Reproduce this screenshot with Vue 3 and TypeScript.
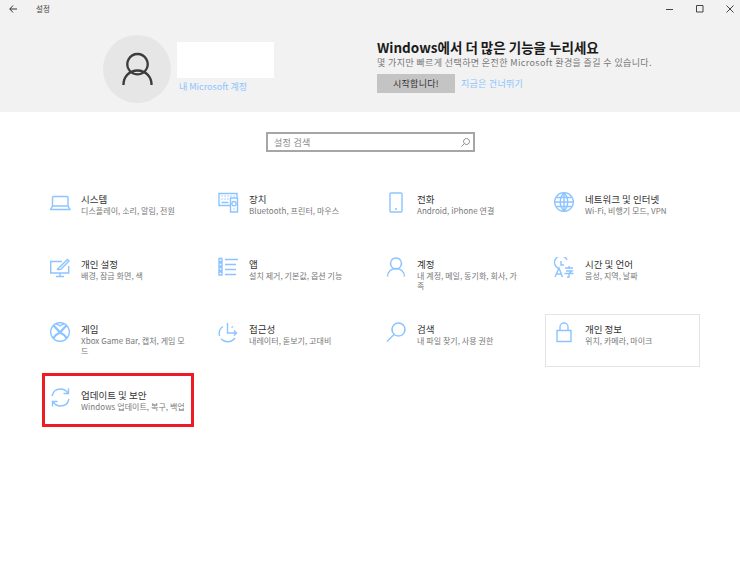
<script setup lang="ts">
interface Tile { id: string; title: string; sub: string; paths: string[]; hover?: boolean; marked?: boolean; thick?: number }
const tiles: Tile[] = [
  { id: 'sys', title: '시스템', sub: '디스플레이, 소리, 알림, 전원', paths: ['M3.500 4.500h13.500a1 1 0 0 1 1 1V14H2.500V5.500a1 1 0 0 1 1-1Z', 'M2.500 14 .7 17.500h19.200L18 14'] },
  { id: 'dev', title: '장치', sub: 'Bluetooth, 프린터, 마우스', paths: ['M12.500 13.500H1v-12h18v4', 'M3.500 4h1M6.500 4h1M9.500 4h1M12.500 4h1M15.500 4h1M3.500 7h1M6.500 7h1M9.500 7h1M3.500 10.500h7', 'M12.500 6h7v14h-7Z', 'M16 9.500a2.200 2.200 0 1 0 .01 0M16 16.500v1'] },
  { id: 'phone', title: '전화', sub: 'Android, iPhone 연결', paths: ['M5 1h10a1 1 0 0 1 1 1v17a1 1 0 0 1-1 1H5a1 1 0 0 1-1-1V2a1 1 0 0 1 1-1Z', 'M9 17h2'] },
  { id: 'net', title: '네트워크 및 인터넷', sub: 'Wi-Fi, 비행기 모드, VPN', paths: ['M10 .7a9.300 9.300 0 1 0 .01 0Z', 'M10 1c-5 5-5 13 0 18M10 1c5 5 5 13 0 18M10 1v18M1 10h18M2.500 5.500h15M2.500 14.500h15'] },
  { id: 'pers', title: '개인 설정', sub: '배경, 잠금 화면, 색', paths: ['M12 4.500H.7v11.500h18V9', 'M6 19.500h8M10 16v3.500', 'M7 12.500c2-.3 1.700-2.500 3.200-2.900L17.500 2.500 19 4l-7.100 7.300c-.8 1.200-2.900 1.500-4.900 1.200Z'] },
  { id: 'apps', title: '앱', sub: '설치 제거, 기본값, 옵션 기능', paths: ['M7 2.500h13M7 7.500h11M7 12.500h11M7 17.500h11', 'M1 1.500h3v3H1ZM1 6h3v3H1ZM1 10.500h3v3H1ZM1 15h3v3H1Z'] },
  { id: 'acc', title: '계정', sub: '내 계정, 메일, 동기화, 회사, 가족', paths: ['M10 1a5.500 5.500 0 1 0 .01 0Z', 'M1.500 19.500c0-4.800 3.800-8 8.500-8s8.500 3.200 8.500 8'] },
  { id: 'time', title: '시간 및 언어', sub: '음성, 지역, 날짜', paths: ['M4.500 11.500A6.500 6.500 0 1 1 13 3', 'M7 4v4h3', 'M1 20 5 11l3.500 9M2.500 17h5', 'M11 11h8M15 9v3M12 14h6l-3 2.500v3.500h-2M10.500 16.500h9'] },
  { id: 'game', title: '게임', sub: 'Xbox Game Bar, 캡처, 게임 모드', paths: ['M10 .7a9.300 9.300 0 1 0 .01 0Z', 'M3.500 3.500C6 6 8 8 10 10.500c2-2.500 4-4.500 6.500-7M3 16.500C5 13.500 7.500 11.500 10 10.500c2.500 1 5 3 7 6', 'M6 2c1.500.3 2.800 1 4 1.800C11.200 3 12.500 2.300 14 2'], thick: 1 },
  { id: 'ease', title: '접근성', sub: '내레이터, 돋보기, 고대비', paths: ['M5 4.500A9 9 0 0 0 1.500 14M3 17c3.500 3.500 10 4 14-1', 'M9.500 1v10h9M16 8.500l2.500 2.500-2.500 2.500M13.500 5.500l1.500-1'] },
  { id: 'search', title: '검색', sub: '내 파일 찾기, 사용 권한', paths: ['M12.500 1a6.500 6.500 0 1 0 .01 0Z', 'M8 12.500 1 19.500'] },
  { id: 'priv', title: '개인 정보', sub: '위치, 카메라, 마이크', paths: ['M3 8.500h14v11H3Z', 'M6 8.500V5a4 4 0 0 1 8 0v3.500'], hover: true },
  { id: 'upd', title: '업데이트 및 보안', sub: 'Windows 업데이트, 복구, 백업', paths: ['M2 9C3 4.500 6.500 2 10.500 2c3 0 5.500 1.300 7.500 4M18.500 1.500V6.500H13.500', 'M19 12c-1 4.500-4.500 7-8.500 7-3 0-5.500-1.300-7.500-4M2.500 19.500V14.500H7.500'], marked: true },
]
</script>

<template>
  <div class="win">
    <header class="top">
      <div class="titlebar">
        <div class="title-left">
          <svg class="back" width="8" height="8" viewBox="0 0 8 8"><path d="M4 .5.8 4 4 7.500M.8 4H8" fill="none" stroke="#333" stroke-width="1" /></svg>
          <span class="app-name">설정</span>
        </div>
        <div class="controls">
          <svg width="8" height="8" viewBox="0 0 8 8"><path d="M0 4.500h7" stroke="#444" fill="none" /></svg>
          <svg width="8" height="8" viewBox="0 0 8 8"><path d="M.5.500h6.500v6.500H.5Z" stroke="#444" fill="none" /></svg>
          <svg width="8" height="8" viewBox="0 0 8 8"><path d="M.5.500l7 7M7.500.500l-7 7" stroke="#444" fill="none" /></svg>
        </div>
      </div>
      <div class="hero">
        <div class="avatar">
          <svg width="32" height="36" viewBox="0 0 32 36"><path d="M16 2a10.500 10.500 0 1 0 .01 0ZM1.500 34c0-8.500 6-15 14.500-15s14.500 6.500 14.500 15" fill="none" stroke="#3c3c3c" stroke-width="2.400" /></svg>
        </div>
        <div class="user">
          <div class="name-box"></div>
          <a class="link ms">내 Microsoft 계정</a>
        </div>
        <div class="promo">
          <h1>Windows에서 더 많은 기능을 누리세요</h1>
          <p>몇 가지만 빠르게 선택하면 온전한 Microsoft 환경을 즐길 수 있습니다.</p>
          <div class="actions">
            <button class="start">시작합니다!</button>
            <a class="link skip">지금은 건너뛰기</a>
          </div>
        </div>
      </div>
    </header>

    <div class="search">
      <span>설정 검색</span>
      <svg width="9" height="9" viewBox="0 0 9 9"><path d="M5.500.500a3 3 0 1 0 .01 0ZM3.300 5.700.5 8.500" fill="none" stroke="#777" stroke-width=".8" /></svg>
    </div>

    <main class="grid">
      <div v-for="t in tiles" :key="t.id" class="tile" :class="{ hover: t.hover, marked: t.marked }">
        <svg class="icon" width="21" height="21" viewBox="0 0 21 21">
          <path v-for="(d, i) in t.paths" :key="i" :d="d" fill="none" stroke="#8cc4ff" :stroke-width="t.thick === i ? 2.400 : 1.400" />
        </svg>
        <div class="text">
          <div class="t">{{ t.title }}</div>
          <div class="s">{{ t.sub }}</div>
        </div>
      </div>
    </main>
  </div>
</template>

<style>
html, body { margin: 0; background: #fff; }
</style>

<style scoped>
.win { width: 740px; height: 579px; overflow: hidden; background: #fff; font-family: "Noto Sans CJK KR", "Noto Sans", sans-serif; position: relative; }
.top { height: 112px; background: #f2f2f2; }
.titlebar { height: 18px; display: flex; justify-content: space-between; align-items: center; }
.title-left { display: flex; align-items: center; }
.back { margin-left: 9px; }
.app-name { margin-left: 19px; font-size: 7.500px; color: #444; line-height: 18px; }
.controls { display: flex; gap: 22px; margin-right: 6px; }
.hero { display: flex; padding: 17px 0 0 103px; }
.avatar { width: 68px; height: 68px; border-radius: 50%; background: #e6e6e6; display: flex; align-items: center; justify-content: center; flex: none; }
.avatar svg { width: 31px; height: 35px; }
.user { width: 200px; margin-left: 6px; padding-top: 7px; box-sizing: border-box; }
.name-box { width: 97px; height: 36px; background: #fff; }
.link { color: #8cc4ff; font-size: 9px; line-height: 12px; }
.ms { display: block; margin: 3px 0 0 2px; }
.skip { letter-spacing: .25px; }
.promo { padding-top: 4px; }
h1 { margin: 0; font-size: 13.500px; line-height: 17px; font-weight: 700; color: #1a1a1a; }
p { margin: 0; font-size: 9px; line-height: 14px; color: #777; letter-spacing: .38px; white-space: nowrap; }
.actions { display: flex; align-items: center; margin-top: 4px; gap: 6px; }
.start { width: 78px; height: 19px; border: 0; padding: 0; background: #c4c4c4; color: #333; font: inherit; font-size: 9px; letter-spacing: .3px; }
.search { width: 209px; height: 20px; margin: 20px 0 0 266px; box-sizing: border-box; border: 2px solid #a6a6a6; background: #fff; display: flex; align-items: center; justify-content: space-between; padding: 0 3px 0 6px; font-size: 9px; letter-spacing: .3px; color: #888; }
.grid { display: grid; grid-template-columns: repeat(4, 155px); grid-auto-rows: 53px; column-gap: 13px; row-gap: 12px; margin: 32px 0 0 41px; }
.tile { display: flex; box-sizing: border-box; padding: 7px 0 0 8px; border: 1px solid transparent; position: relative; }
.tile.hover { border: 1px solid #e4e4e4; }
.tile.marked::after { content: ""; position: absolute; left: 0; top: -7px; width: 152px; height: 54px; box-sizing: border-box; border: 3px solid #ed1c24; }
.icon { flex: none; }
.text { margin-left: 10px; width: 105px; word-break: break-all; }
.tile.marked .text { margin-top: 1px; }
.t { font-size: 9.500px; line-height: 14px; color: #333; }
.s { font-size: 8px; line-height: 10px; color: #777; letter-spacing: .05px; }
</style>
